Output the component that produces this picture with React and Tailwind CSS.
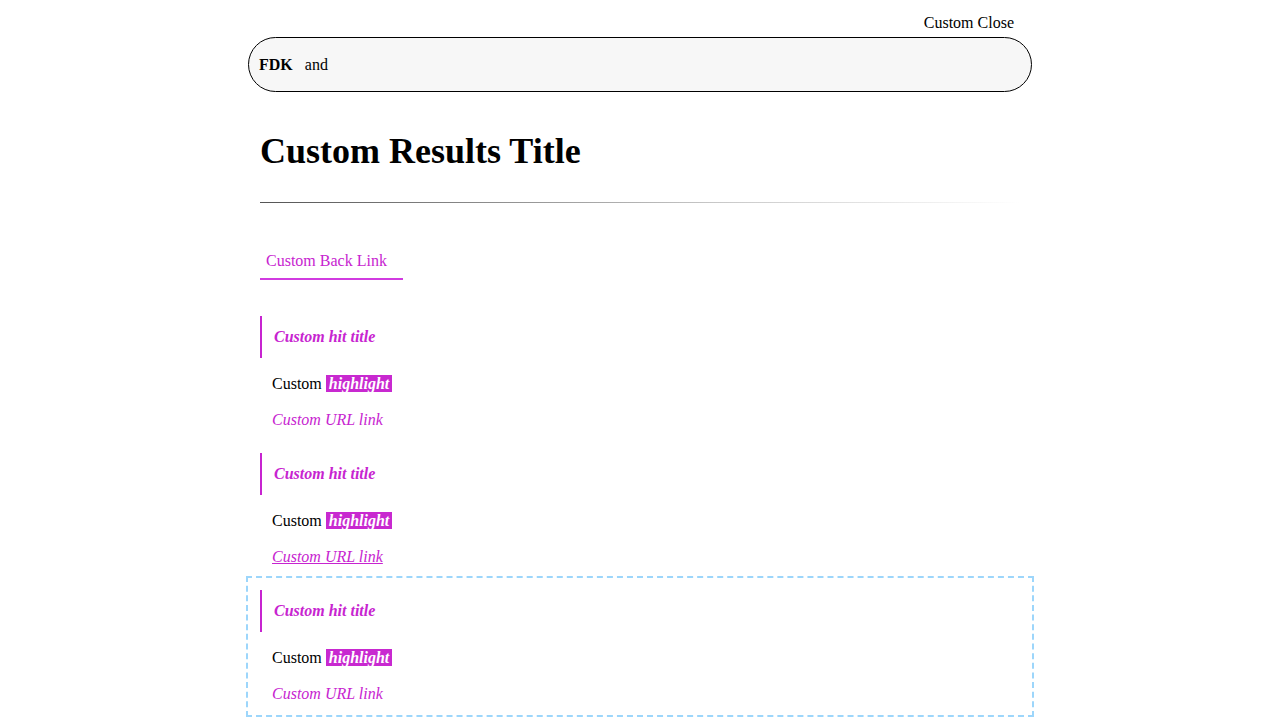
import React from "react";

const hits = [
  { id: 1, hover: false, focus: false },
  { id: 2, hover: true, focus: false },
  { id: 3, hover: false, focus: true },
];

function Hit({ hover, focus }) {
  return (
    <div className={"px-3 pt-3 pb-[9px] " + (focus ? "outline-2 outline-dashed outline-[#9dd6fb]" : "")}>
      <div className="border-l-2 border-[#c724d0] pl-3 py-3 leading-[18px]">
        <span className="font-bold italic text-[#c724d0]">Custom hit title</span>
      </div>
      <p className="mt-[14px] pl-3 leading-6">
        Custom{" "}
        <span className="bg-[#c829d0] text-white font-bold italic px-[3px]">highlight</span>
      </p>
      <p className="mt-3 pl-3 leading-6">
        <a href="#" className={"italic text-[#c724d0] " + (hover ? "underline" : "no-underline")}>
          Custom URL link
        </a>
      </p>
    </div>
  );
}

export default function App() {
  return (
    <div className="min-h-[720px] bg-white text-black text-base font-['Liberation_Serif',serif]">
      <div className="w-[784px] mx-auto">
        {/* header */}
        <div className="h-[37px] flex items-end justify-end pr-[18px] pb-[5px] leading-[18px]">
          <button className="cursor-pointer">Custom Close</button>
        </div>
        <div className="h-[55px] rounded-full border border-black bg-[#f7f7f7] flex items-center gap-3 pl-[10px]">
          <span className="font-bold">FDK</span>
          <span>and</span>
        </div>

        {/* results */}
        <div className="px-3">
          <h1 className="mt-[39px] text-[36px] leading-[41px] font-bold">Custom Results Title</h1>
          <div className="mt-[30px] h-px bg-gradient-to-r from-[#555] via-[#c8c8c8] via-60% to-transparent"></div>
          <div className="mt-[46px]">
            <a href="#" className="inline-block pl-[6px] pr-4 pb-2 leading-[18px] text-[#c724d0] border-b-2 border-[#d13be0]">
              Custom Back Link
            </a>
          </div>
        </div>
        <div className="mt-[24px]">
          {hits.map((h) => (
            <Hit key={h.id} hover={h.hover} focus={h.focus} />
          ))}
        </div>
      </div>
    </div>
  );
}
